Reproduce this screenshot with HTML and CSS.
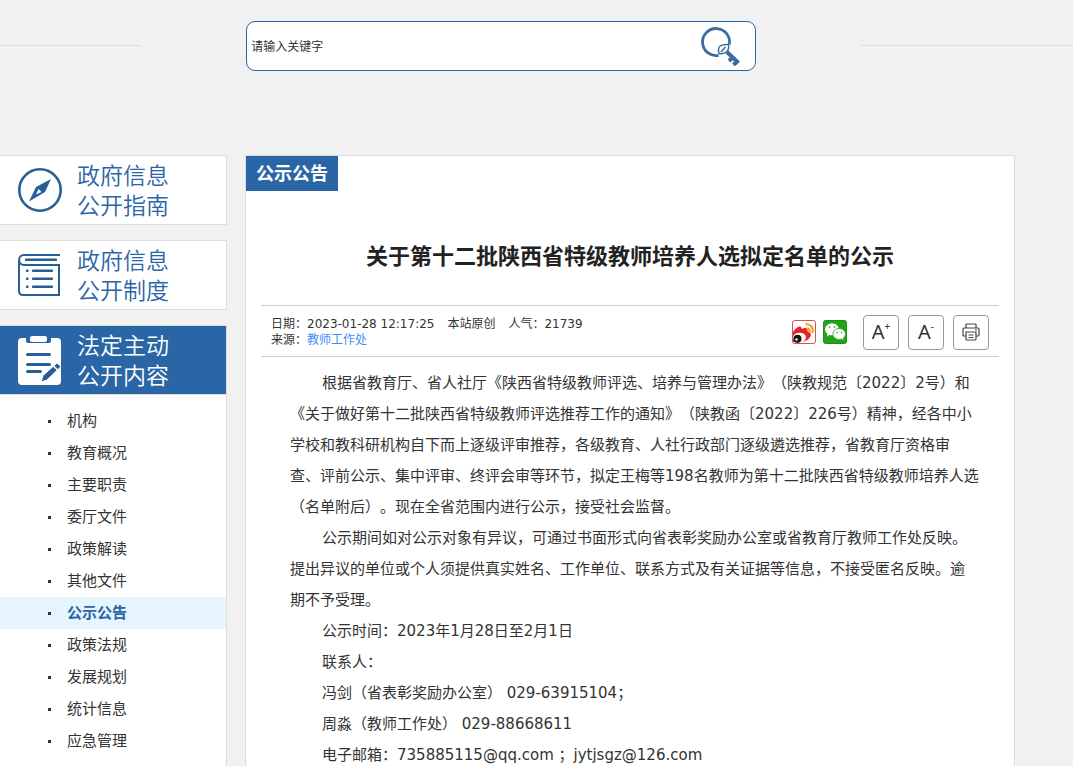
FILE: index.html
```
<!DOCTYPE html>
<html lang="zh-CN">
<head>
<meta charset="utf-8">
<meta name="viewport" content="width=device-width, initial-scale=1">
<title>公示公告</title>
<link rel="stylesheet" href="styles.css">
</head>
<body>
<div class="page">
  <header class="top">
    <span class="rule rule-left"></span>
    <form class="search" role="search">
      <input class="search-input" type="text" value="请输入关键字" aria-label="请输入关键字">
      <button class="search-button" type="button" aria-label="搜索">
        <svg width="40" height="40" viewBox="0 0 40 40" fill="none" stroke="#3b6c9b">
          <path d="M18.500 29.300A13.500 13.500 0 1 1 29.300 18.500" stroke-width="2.800"/>
          <path d="M19 27.500C17 20 21 18 28.500 18.500C29.500 25 26 28.500 19 27.500Z" stroke-width="1.500"/>
          <path d="M21 26L25.500 21" stroke-width="1.500"/>
          <path d="M27 26L38.500 37" stroke-width="4"/>
          <path d="M33 31L29 35M37 35.500L33.500 39" stroke-width="4"/>
        </svg>
      </button>
    </form>
    <span class="rule rule-right"></span>
  </header>

  <div class="columns">
    <nav class="side">
      <a class="card" href="#">
        <svg class="card-icon" viewBox="0 0 44 50" fill="none">
          <circle cx="22" cy="25" r="20.700" stroke="#265f98" stroke-width="2.600"/>
          <path d="M33 14L27 27L11 36.500L18 22Z" fill="#265f98"/>
          <path d="M20.500 24L23.500 27L18 29.500Z" fill="#fff"/>
        </svg>
        <span class="card-text">政府信息<br>公开指南</span>
      </a>
      <a class="card" href="#">
        <svg class="card-icon" viewBox="0 0 44 50" fill="none" stroke="#265f98" stroke-width="2">
          <path d="M42 5H6C-.5 5 -.5 15 6 15H41V45H5Q1 45 1 41V10"/>
          <path d="M8 9.700H38M15 20.700H34M15 28.700H34M15 36.700H34M9 20.700H9.500M9 28.700H9.500M9 36.700H9.500" stroke-width="2.400" stroke-linecap="round"/>
        </svg>
        <span class="card-text">政府信息<br>公开制度</span>
      </a>
      <section class="group">
        <a class="card card-active" href="#">
          <svg class="card-icon" viewBox="0 0 44 50" fill="none">
            <rect x="0" y="3" width="43" height="47" rx="4" fill="#fff"/>
            <path d="M8 0H33V6Q33 8 31 8H10Q8 8 8 6Z" fill="#2a66a6"/>
            <rect x="12" y="1" width="17" height="6" rx="2" fill="#fff"/>
            <path d="M9.500 19.500H31.500M9.500 29.500H31.500M9.500 36.500H22.500" stroke="#265f98" stroke-width="3" stroke-linecap="round"/>
            <path d="M23 47L25 40.500L39 28L43 31.500L29 45Z" fill="#265f98" stroke="#fff" stroke-width="1"/>
            <path d="M35.500 31L39.500 35" stroke="#fff" stroke-width="1.500"/>
          </svg>
          <span class="card-text">法定主动<br>公开内容</span>
        </a>
        <ul class="menu">
          <li><a href="#">机构</a></li>
          <li><a href="#">教育概况</a></li>
          <li><a href="#">主要职责</a></li>
          <li><a href="#">委厅文件</a></li>
          <li><a href="#">政策解读</a></li>
          <li><a href="#">其他文件</a></li>
          <li class="current"><a href="#">公示公告</a></li>
          <li><a href="#">政策法规</a></li>
          <li><a href="#">发展规划</a></li>
          <li><a href="#">统计信息</a></li>
          <li><a href="#">应急管理</a></li>
        </ul>
      </section>
    </nav>

    <main class="main">
      <h2 class="channel">公示公告</h2>
      <article class="article">
        <h1 class="title">关于第十二批陕西省特级教师培养人选拟定名单的公示</h1>
        <div class="meta">
          <div class="meta-text">
            <div class="meta-row"><span>日期：2023-01-28 12:17:25</span><span>本站原创</span><span>人气：21739</span></div>
            <div>来源：<a class="source" href="#">教师工作处</a></div>
          </div>
          <div class="share">
            <button class="share-icon" type="button" aria-label="微博">
              <svg width="24" height="24" viewBox="0 0 24 24" fill="none">
                <rect x=".5" y=".5" width="23" height="23" rx="2" fill="#fff" stroke="#d9504c"/>
                <path d="M1 16V12C3 9 6 6 8.500 6.500L10 9C13 7 16 8 15.500 11.500C19 12 20 15 17.500 18C14 22 9 23 1 22Z" fill="#e2232b"/>
                <ellipse cx="7.500" cy="17.500" rx="6.500" ry="4.800" fill="#fff"/>
                <circle cx="5.500" cy="18.800" r="4" fill="#151515"/>
                <circle cx="4.500" cy="19.500" r="1.200" fill="#fff"/>
                <path d="M13.500 4.500C18.500 3.500 22 8 20.500 13M14 8.500C17 8 18.500 10 17.500 13" stroke="#f69a22" stroke-width="2"/>
              </svg>
            </button>
            <button class="share-icon" type="button" aria-label="微信">
              <svg width="24" height="24" viewBox="0 0 24 24">
                <rect x=".5" y=".5" width="23" height="23" rx="2" fill="#25a318" stroke="#218c18"/>
                <path d="M9 3.500C5 3.500 2 6 2 9.500Q2 12 4.500 14L4 16.500L6.500 15L10 15.500C14 15.500 16.500 12.500 16 9C15.500 5.500 12.500 3.500 9 3.500Z" fill="#fff"/>
                <path d="M16 8.500C12.500 8.500 10 11 10 14C10 17.500 13 19.500 16.500 19.500L18.500 19L21 20.500L20.500 18Q22.500 16.500 22.500 14C22.500 11 19.500 8.500 16 8.500Z" fill="#fff" stroke="#25a318" stroke-width=".8"/>
                <g fill="#277a20"><circle cx="6.500" cy="7" r=".8"/><circle cx="11.500" cy="7" r=".8"/><circle cx="14" cy="12.500" r=".7"/><circle cx="18.500" cy="12.500" r=".7"/></g>
              </svg>
            </button>
          </div>
          <div class="tools">
            <button class="tool" type="button" aria-label="放大字体">A<sup>+</sup></button>
            <button class="tool" type="button" aria-label="缩小字体">A<sup>-</sup></button>
            <button class="tool" type="button" aria-label="打印">
              <svg width="18" height="18" viewBox="0 0 18 18" fill="none" stroke="#444" stroke-width="1.200">
                <path d="M4 5V1.500Q4 1 4.500 1H13.500Q14 1 14 1.500V5"/>
                <path d="M4 13H2Q1 13 1 12V6Q1 5 2 5H16Q17 5 17 6V12Q17 13 16 13H14"/>
                <path d="M4 9H14V16Q14 17 13 17H5Q4 17 4 16ZM6.500 12H11.500M6.500 14.500H11.500M13 7H15"/>
              </svg>
            </button>
          </div>
        </div>
        <div class="content">
          <p>根据省教育厅、省人社厅《陕西省特级教师评选、培养与管理办法》（陕教规范〔2022〕2号）和《关于做好第十二批陕西省特级教师评选推荐工作的通知》（陕教函〔2022〕226号）精神，经各中小学校和教科研机构自下而上逐级评审推荐，各级教育、人社行政部门逐级遴选推荐，省教育厅资格审查、评前公示、集中评审、终评会审等环节，拟定王梅等198名教师为第十二批陕西省特级教师培养人选（名单附后）。现在全省范围内进行公示，接受社会监督。</p>
          <p>公示期间如对公示对象有异议，可通过书面形式向省表彰奖励办公室或省教育厅教师工作处反映。提出异议的单位或个人须提供真实姓名、工作单位、联系方式及有关证据等信息，不接受匿名反映。逾期不予受理。</p>
          <p>公示时间：2023年1月28日至2月1日</p>
          <p>联系人：</p>
          <p>冯剑（省表彰奖励办公室） 029-63915104；</p>
          <p>周淼（教师工作处） 029-88668611</p>
          <p>电子邮箱：735885115@qq.com ；jytjsgz@126.com</p>
        </div>
      </article>
    </main>
  </div>
</div>
</body>
</html>
```
FILE: styles.css
```
* {
  box-sizing: border-box;
}

body {
  margin: 0;
  background: #f1f1f1;
  color: #333;
  font: 12px/16px "DejaVu Sans", "Noto Sans CJK SC", sans-serif;
  text-spacing-trim: space-all;
}

h1, h2, p, ul {
  margin: 0;
  padding: 0;
}

a {
  color: inherit;
  text-decoration: none;
}

button {
  border: 0;
  padding: 0;
  background: none;
  color: inherit;
  font: inherit;
  cursor: pointer;
}

svg {
  display: block;
}

.page {
  display: flex;
  flex-direction: column;
  height: 100vh;
  overflow: hidden;
}

/* Search bar */
.top {
  display: flex;
  gap: 105px;
  flex: none;
  padding: 21px 0 84px;
}

.rule {
  height: 1px;
  margin-top: 24px;
  background: #ddd;
}

.rule-left {
  flex: 2;
}

.rule-right {
  flex: 3;
}

.search {
  display: flex;
  align-items: center;
  width: 510px;
  height: 50px;
  padding: 0 15px 0 4px;
  border: 1px solid #2a66a6;
  border-radius: 9px;
  background: #fff;
}

.search-input {
  flex: 1;
  min-width: 0;
  padding: 2px 0 0;
  border: 0;
  outline: 0;
  background: none;
  color: #333;
  font: inherit;
}

/* Two columns */
.columns {
  display: grid;
  grid-template-columns: 227px 1fr;
  gap: 18px;
  flex: 1 0 auto;
  padding-right: 58px;
}

.side {
  display: flex;
  flex-direction: column;
  gap: 15px;
}

.card {
  display: flex;
  align-items: center;
  gap: 15px;
  height: 70px;
  padding-left: 18px;
  border: 1px solid #ddd;
  border-left: 0;
  background: #fff;
  color: #2a66a6;
}

.card-icon {
  width: 44px;
  height: 50px;
}

.card-text {
  padding-top: 2px;
  font-size: 23px;
  font-weight: 350;
  line-height: 30px;
}

.card-active {
  background: #2a66a6;
  color: #fff;
}

.group {
  flex: 1;
  display: flex;
  flex-direction: column;
}

.menu {
  flex: 1;
  padding: 10px 0;
  border-right: 1px solid #ddd;
  background: #fff;
  list-style: none;
}

.menu a {
  display: flex;
  align-items: center;
  gap: 16px;
  height: 32px;
  padding-left: 48px;
  font-size: 15px;
  line-height: 32px;
}

.menu a::before {
  content: "";
  width: 3px;
  height: 3px;
  background: #333;
}

.menu .current {
  background: #e6f4fe;
  color: #2a66a6;
  font-weight: bold;
}

/* Article */
.main {
  border: 1px solid #ddd;
  background: #fff;
}

.channel {
  width: fit-content;
  padding: 0 10px;
  background: #2a66a6;
  color: #fff;
  font-size: 18px;
  line-height: 35px;
}

.article {
  padding: 49px 15px 0;
}

.title {
  padding-bottom: 31px;
  color: #222;
  font-size: 22px;
  line-height: 34px;
  text-align: center;
}

.meta {
  display: flex;
  align-items: center;
  padding: 2px 10px 0;
  height: 52px;
  border: solid #ccc;
  border-width: 1px 0;
}

.meta-text {
  flex: 1;
}

.meta-row {
  display: flex;
  gap: 13px;
}

.source {
  color: #428bfa;
}

.share {
  display: flex;
  gap: 7px;
  margin-right: 16px;
}

.tools {
  display: flex;
  gap: 9px;
}

.tool {
  display: flex;
  align-items: center;
  justify-content: center;
  width: 36px;
  height: 35px;
  border: 1px solid #999;
  border-radius: 4px;
  font: 20px/24px "Noto Sans", sans-serif;
}

.tool sup {
  align-self: flex-start;
  font-size: 10px;
  line-height: 20px;
}

.content {
  padding: 11px 20px 20px 29px;
  font-size: 15px;
  line-height: 31px;
}

.content p {
  text-indent: 32px;
}
```
